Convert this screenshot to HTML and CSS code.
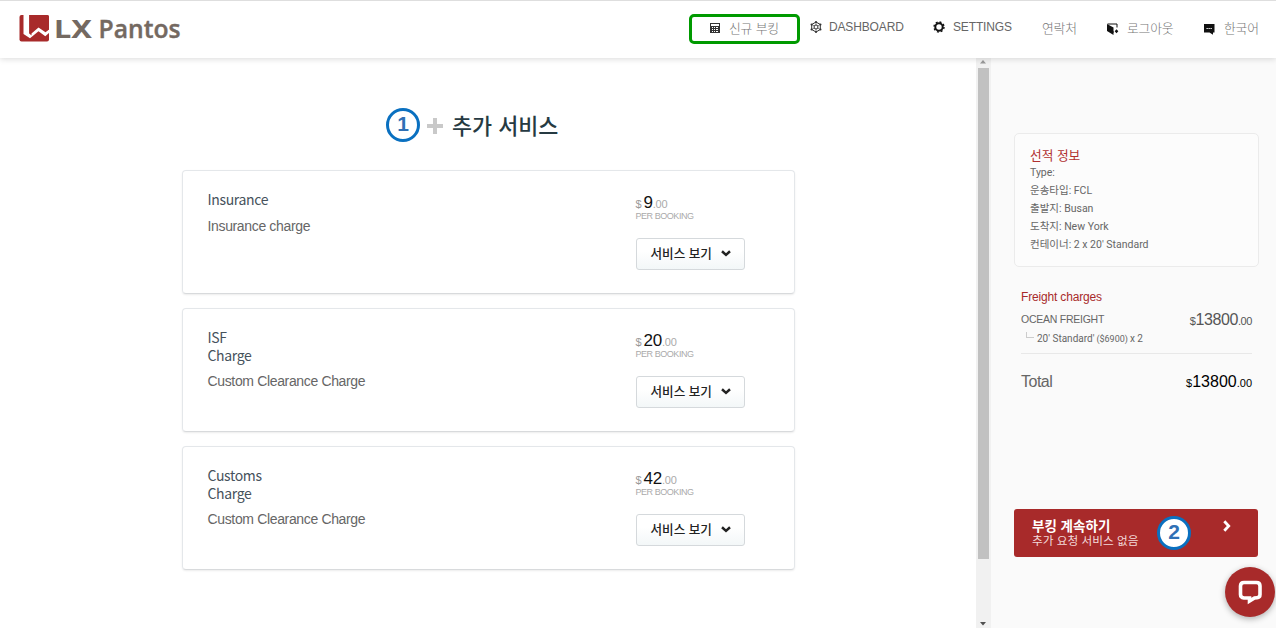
FILE: index.html
```html
<!DOCTYPE html>
<html lang="ko">
<head>
<meta charset="utf-8">
<title>LX Pantos</title>
<link rel="stylesheet" href="styles.css">
</head>
<body>
<header class="topbar">
  <svg class="logo" width="170" height="36" viewBox="0 0 170 36">
    <rect x="1.500" y="1" width="29.500" height="26.500" rx="2" fill="#a82a2a"/>
    <path fill="#fff" d="M5.500 0H11.300V19.700L20.500 12.300L27.500 17.600L31.500 15V18.500L27.300 22.200L20.500 17.300L12 24.200L5.500 20Z"/>
    <path fill="#a82a2a" d="M11.300 1H29Q31 1 31 3V15.600L27.500 18.200L20.500 13.600L13.500 19.500V21.500L11.300 19.500Z"/>
    <text class="logo-text" x="36" y="24" textLength="38" lengthAdjust="spacingAndGlyphs">LX</text>
    <text class="logo-text logo-name" x="80.500" y="24" textLength="82" lengthAdjust="spacingAndGlyphs">Pantos</text>
  </svg>
  <nav class="nav">
    <a class="nav-item nav-active"><svg width="11" height="11" viewBox="0 0 11 11"><path fill="#333" fill-rule="evenodd" d="M0 0H10V10H0ZM1 1V3H9V1ZM2 4V5H3V4ZM4 4V5H5V4ZM6 4V5H8V4ZM2 6V7H3V6ZM4 6V7H5V6ZM6 6V7H8V6ZM2 8V9H3V8ZM4 8V9H5V8ZM6 8V9H8V8Z"/></svg><span class="ko">신규 부킹</span></a>
    <a class="nav-item"><svg width="12" height="12" viewBox="0 0 12 12" fill="none" stroke="#333"><path d="M6 1L10.300 3.500V8.500L6 11L1.700 8.500V3.500Z"/><circle cx="6" cy="6" r="2"/><path stroke-width=".6" d="M6 1V4M1.700 3.500L4.300 5M10.300 3.500L7.700 5M6 8V11M1.700 8.500L4.300 7M10.300 8.500L7.700 7"/><g fill="#333" stroke="none"><circle cx="6" cy="1" r="1"/><circle cx="10.500" cy="3.500" r="1"/><circle cx="10.500" cy="8.500" r="1"/><circle cx="6" cy="11" r="1"/><circle cx="1.500" cy="8.500" r="1"/><circle cx="1.500" cy="3.500" r="1"/></g></svg><span>DASHBOARD</span></a>
    <a class="nav-item nav-settings"><svg width="12" height="12" viewBox="0 0 12 12" fill="none" stroke="#111"><circle cx="6" cy="6" r="3.700" stroke-width="2"/><circle cx="6" cy="6" r="5" stroke-width="1.400" stroke-dasharray="1.960 1.960"/></svg><span>SETTINGS</span></a>
    <a class="nav-item"><span class="ko">연락처</span></a>
    <a class="nav-item"><svg width="12" height="12" viewBox="0 0 12 12"><path fill="#111" d="M0 1L6.500 4.500V12L0 8Z"/><path fill="none" stroke="#111" d="M.5 1H10V4.500M6 9H7"/><path fill="#111" d="M9.500 6.300L11.300 8.200L9.500 10.200L7.700 8.200Z"/></svg><span class="ko">로그아웃</span></a>
    <a class="nav-item"><svg width="12" height="12" viewBox="0 0 12 12"><path fill="#111" d="M0 1H10.500V9.500H9V11.800L5.500 9.500H0Z"/><path stroke="#fff" stroke-dasharray="1.300 .7" d="M2.500 5.500H8.300"/></svg><span class="ko">한국어</span></a>
  </nav>
</header>
<div class="body">
  <main class="main">
    <h1 class="heading"><span class="step">1</span><svg class="plus" width="16" height="16" viewBox="0 0 16 16"><path fill="#c9c9c9" d="M6 0H10V6H16V10H10V16H6V10H0V6H6Z"/></svg><span class="heading-text">추가 서비스</span></h1>
    <section class="card">
      <div class="card-info"><h2 class="card-title">Insurance</h2><p class="card-desc">Insurance charge</p></div>
      <div class="card-side"><div class="price"><span class="cur">$</span>9<span class="cents">.00</span></div><div class="per">PER BOOKING</div>
        <button class="view">서비스 보기<svg width="10" height="7" viewBox="0 0 10 7"><path fill="none" stroke="#222" stroke-width="2.500" d="M1 1.300L5 4.900L9 1.300"/></svg></button></div>
    </section>
    <section class="card">
      <div class="card-info"><h2 class="card-title">ISF<br>Charge</h2><p class="card-desc">Custom Clearance Charge</p></div>
      <div class="card-side"><div class="price"><span class="cur">$</span>20<span class="cents">.00</span></div><div class="per">PER BOOKING</div>
        <button class="view">서비스 보기<svg width="10" height="7" viewBox="0 0 10 7"><path fill="none" stroke="#222" stroke-width="2.500" d="M1 1.300L5 4.900L9 1.300"/></svg></button></div>
    </section>
    <section class="card">
      <div class="card-info"><h2 class="card-title">Customs<br>Charge</h2><p class="card-desc">Custom Clearance Charge</p></div>
      <div class="card-side"><div class="price"><span class="cur">$</span>42<span class="cents">.00</span></div><div class="per">PER BOOKING</div>
        <button class="view">서비스 보기<svg width="10" height="7" viewBox="0 0 10 7"><path fill="none" stroke="#222" stroke-width="2.500" d="M1 1.300L5 4.900L9 1.300"/></svg></button></div>
    </section>
  </main>
  <div class="scroll">
    <svg width="6" height="4" viewBox="0 0 6 4"><path fill="#999" d="M0 3.500L3 0L6 3.500Z"/></svg>
    <div class="thumb"></div>
    <svg class="down" width="6" height="4" viewBox="0 0 6 4"><path fill="#505050" d="M0 0H6L3 3.500Z"/></svg>
  </div>
  <aside class="aside">
    <section class="info">
      <h3 class="info-title">선적 정보</h3>
      <p class="info-row">Type:</p>
      <p class="info-row">운송타입: FCL</p>
      <p class="info-row">출발지: Busan</p>
      <p class="info-row">도착지: New York</p>
      <p class="info-row">컨테이너: 2 x 20' Standard</p>
    </section>
    <section class="charges">
      <h3 class="charges-title">Freight charges</h3>
      <div class="line"><span class="line-name">OCEAN FREIGHT</span><span class="amount"><small>$</small>13800<small>.00</small></span></div>
      <div class="detail"><i class="branch"></i>20' Standard' <span class="rate">($6900)</span> x 2</div>
      <div class="total"><span class="total-name">Total</span><span class="amount amount-total"><small>$</small>13800<small>.00</small></span></div>
    </section>
    <button class="continue">
      <span class="continue-text"><b class="continue-title">부킹 계속하기</b><span class="continue-sub">추가 요청 서비스 없음</span></span>
      <span class="step step-two">2</span>
      <svg class="next" width="8" height="12" viewBox="0 0 8 12"><path fill="none" stroke="#fff" stroke-width="2.800" d="M1.300 1.300L5.700 6L1.300 10.700"/></svg>
    </button>
  </aside>
</div>
<div class="chat"><svg width="26" height="26" viewBox="0 0 26 26"><path fill="none" stroke="#fff" stroke-width="3.600" d="M7 3.500H19.500Q23 3.500 23 7V15.500Q23 18.500 20 18.800L17.500 19L12.500 22V19H7Q3.500 18.500 3.500 15.500V7Q3.500 3.500 7 3.500Z"/></svg></div>
</body>
</html>
```
FILE: styles.css
```css
* { box-sizing: border-box; }
body { margin: 0; width: 1276px; height: 628px; overflow: hidden; background: #fff; display: flex; flex-direction: column; font-family: "Liberation Sans", "Noto Sans CJK KR", sans-serif; color: #666; }
h1, h2, h3, p { margin: 0; font-weight: 400; }
button { border: 0; margin: 0; text-align: left; }
.topbar { flex: none; height: 58px; background: #fff; border-top: 1px solid #dedede; display: flex; padding: 13px 0 0 18px; position: relative; z-index: 1; box-shadow: 0 1px 6px rgba(0,0,0,.15); }
.logo { flex: none; margin-right: 501px; overflow: visible; }
.logo-text { font: 700 25px "Noto Sans", sans-serif; fill: #746961; }
.logo-name { font: 600 25px "Open Sans", sans-serif; stroke: #746961; stroke-width: .4px; }
.nav { display: grid; grid-template-columns: 121px 123px 109px 65px 97px 60px; height: 30px; }
.nav-item { display: flex; align-items: center; font-size: 12px; height: 26px; white-space: nowrap; letter-spacing: -.15px; }
.nav-item svg { flex: none; margin-right: 7px; }
.nav-settings svg { margin-right: 8px; }
.nav-item .ko { font: 300 12.800px/20px "Noto Sans CJK KR", sans-serif; position: relative; top: 1px; color: #777; }
.nav-item:nth-child(n+5) svg { position: relative; top: 2px; margin-right: 8px; }
.nav-active { width: 111px; height: 30px; border: 3px solid #009a00; border-radius: 5px; padding: 0 0 2px 18px; }
.nav-active svg { margin-right: 8px; }
.nav-active .ko { top: 0; }
.body { flex: 1; display: flex; min-height: 0; }
.main { width: 976px; padding: 50px 0 0 181.500px; }
.heading { display: flex; align-items: center; height: 34px; margin: 0 0 28px 204.500px; font: 500 21.800px/34px "Noto Sans CJK KR", sans-serif; color: #263a42; }
.step { display: flex; align-items: center; justify-content: center; width: 34px; height: 34px; border: 3px solid #0a70c0; border-radius: 50%; background: #fff; color: #2f70b5; font: 700 21px/20px "Liberation Sans", sans-serif; padding-bottom: 3px; }
.plus { margin: 2px 9px 0 7px; }
.card { display: flex; width: 613px; height: 124px; margin-bottom: 14px; padding: 20px 0 0 25px; border: 1px solid #e4e7ea; border-bottom-color: #d8dadc; border-radius: 4px; box-shadow: 0 1px 2px rgba(0,0,0,.08); }
.card-info { width: 428px; }
.card-title { font: 400 14px/17.500px "Noto Sans CJK KR", sans-serif; color: #46525c; letter-spacing: -.35px; }
.card-desc { font-size: 14px; line-height: 20px; margin-top: 7px; letter-spacing: -.35px; }
.card-side { width: 110px; padding-top: 3px; }
.price { font-size: 17px; line-height: 18px; height: 17px; color: #111; letter-spacing: -.2px; }
.cur { font-size: 11px; color: #999; margin-right: 2px; }
.cents { font-size: 11px; color: #aaa; }
.per { font-size: 9px; line-height: 10px; color: #aaa; letter-spacing: -.45px; }
.view { display: flex; align-items: center; justify-content: space-between; width: 109px; height: 32px; margin-top: 17px; padding: 0 13px 2px 14px; border: 1px solid #d5d9dc; border-radius: 3px; background: linear-gradient(#fff 40%, #f3f7f8); font: 500 12.600px/20px "Noto Sans CJK KR", sans-serif; color: #222; }
.scroll { width: 15px; background: #f1f1f1; display: flex; flex-direction: column; align-items: center; padding: 2px 1px 2px 0; }
.thumb { flex: none; width: 11px; height: 491px; margin: 4px 0 0; background: #c1c1c1; }
.down { margin-top: auto; }
.aside { width: 285px; background: #fafafa; padding: 75px 18px 0 23px; }
.info { height: 134px; width: 245px; border: 1px solid #ebebeb; border-radius: 5px; padding: 12px 15px; background: #fcfcfc; }
.info-title { font: 400 12.700px/18px "Noto Sans CJK KR", sans-serif; color: #b03030; }
.info-row { font: 400 10.500px/18px Roboto, "Noto Sans CJK KR", sans-serif; height: 18px; }
.charges { padding: 22px 6px 0 7px; height: 242px; }
.charges-title { font-size: 12px; line-height: 16px; color: #a82a2a; letter-spacing: -.17px; }
.line { display: flex; justify-content: space-between; height: 23px; padding-top: 5px; font-size: 11px; line-height: 18px; }
.line-name { letter-spacing: -.25px; font-size: 10.500px; }
.amount { font-size: 16px; line-height: 20px; color: #555; letter-spacing: -.4px; }
.amount small { font-size: 11px; }
.detail { display: flex; gap: 2px; height: 26px; padding: 3px 0 0 5px; border-bottom: 1px solid #e8e8e8; font: 400 10px/16px Roboto, sans-serif; }
.branch { width: 8px; height: 6px; margin: 1px 1px 0 0; border-left: 1px solid #ccc; border-bottom: 1px solid #ccc; }
.rate { font-size: 9px; }
.total { display: flex; justify-content: space-between; padding-top: 18px; font-size: 16px; line-height: 20px; }
.total-name { letter-spacing: -.5px; }
.amount-total { color: #000; letter-spacing: 0; }
.continue { display: flex; width: 244px; height: 48px; padding: 7px 27px 0 18px; background: #a82a2a; border-radius: 3px; color: #fff; font-family: "Noto Sans CJK KR", sans-serif; }
.continue-text { display: flex; flex-direction: column; width: 125px; flex: none; white-space: nowrap; }
.continue-title { font-size: 13.500px; line-height: 18px; }
.continue-sub { font-size: 11.700px; line-height: 12px; color: #f2dada; }
.step-two { flex: none; }
.next { margin: 4px 0 0 auto; }
.chat { position: absolute; left: 1225px; top: 567px; width: 50px; height: 50px; border-radius: 50%; background: #a82a2a; display: flex; align-items: center; justify-content: center; box-shadow: 0 2px 6px rgba(0,0,0,.3); }
```
